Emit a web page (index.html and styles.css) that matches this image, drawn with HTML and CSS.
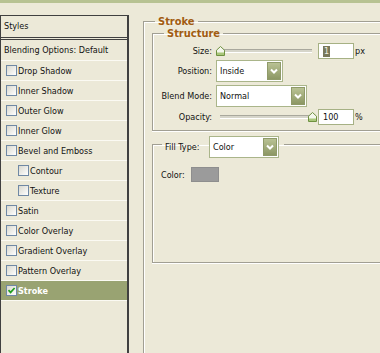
FILE: index.html
```html
<!DOCTYPE html>
<html>
<head>
<meta charset="utf-8">
<link rel="stylesheet" href="styles.css">
</head>
<body>
<div class="topbar"></div>
<div class="main">
  <div class="styles-panel">
    <div class="styles-head">Styles</div>
    <div class="row blend">Blending Options: Default</div>
    <div class="row"><span class="cb"></span>Drop Shadow</div>
    <div class="row"><span class="cb"></span>Inner Shadow</div>
    <div class="row"><span class="cb"></span>Outer Glow</div>
    <div class="row"><span class="cb"></span>Inner Glow</div>
    <div class="row"><span class="cb"></span>Bevel and Emboss</div>
    <div class="row sub"><span class="cb"></span>Contour</div>
    <div class="row sub"><span class="cb"></span>Texture</div>
    <div class="row"><span class="cb"></span>Satin</div>
    <div class="row"><span class="cb"></span>Color Overlay</div>
    <div class="row"><span class="cb"></span>Gradient Overlay</div>
    <div class="row"><span class="cb"></span>Pattern Overlay</div>
    <div class="row active"><span class="cb"><svg width="9" height="9" viewBox="0 0 9 9"><path d="M1.5 4.2L3.6 6.4L7.6 2" fill="none" stroke="#1f9e1f" stroke-width="1.7"/></svg></span>Stroke</div>
  </div>
  <div class="content">
    <fieldset class="grp stroke">
      <legend class="title">Stroke</legend>
      <fieldset class="grp structure">
        <legend class="title sub-title">Structure</legend>
        <div class="frow size-row">
          <span class="lbl">Size:</span>
          <div class="slider">
            <div class="track"></div>
            <svg class="thumb thumb-min" width="9" height="10" viewBox="0 0 9 10"><path d="M0.5 9.5V4.2L4.5 0.5L8.5 4.2V9.5Z" fill="#f4f7ec" stroke="#6f9140"/><rect x="1" y="6.5" width="7" height="2.5" fill="#a9c77a"/></svg>
          </div>
          <div class="num"><span class="sel">1</span></div>
          <span class="unit">px</span>
        </div>
        <div class="frow pos-row">
          <span class="lbl">Position:</span>
          <div class="select w-pos"><span>Inside</span><span class="btn"><svg width="12" height="16" viewBox="0 0 12 16"><path d="M3 6.5L6 9.5L9 6.5" fill="none" stroke="#fff" stroke-width="2"/></svg></span></div>
        </div>
        <div class="frow blend-row">
          <span class="lbl">Blend Mode:</span>
          <div class="select w-blend"><span>Normal</span><span class="btn"><svg width="12" height="16" viewBox="0 0 12 16"><path d="M3 6.5L6 9.5L9 6.5" fill="none" stroke="#fff" stroke-width="2"/></svg></span></div>
        </div>
        <div class="frow op-row">
          <span class="lbl">Opacity:</span>
          <div class="slider">
            <div class="track"></div>
            <svg class="thumb thumb-max" width="9" height="10" viewBox="0 0 9 10"><path d="M0.5 9.5V4.2L4.5 0.5L8.5 4.2V9.5Z" fill="#f4f7ec" stroke="#6f9140"/><rect x="1" y="6.5" width="7" height="2.5" fill="#a9c77a"/></svg>
          </div>
          <div class="num">100</div>
          <span class="unit">%</span>
        </div>
      </fieldset>
      <fieldset class="grp fill">
        <legend class="fill-legend">
          <span class="ft-lbl">Fill Type:</span>
          <div class="select w-fill"><span>Color</span><span class="btn"><svg width="12" height="16" viewBox="0 0 12 16"><path d="M3 6.5L6 9.5L9 6.5" fill="none" stroke="#fff" stroke-width="2"/></svg></span></div>
        </legend>
        <div class="color-row"><span class="c-lbl">Color:</span><span class="swatch"></span></div>
      </fieldset>
    </fieldset>
  </div>
</div>
</body>
</html>
```

FILE: styles.css
```css
html, body {
  margin: 0;
  height: 100%;
  overflow: hidden;
  background: #ece9d8;
}
body {
  font-family: "DejaVu Sans Condensed", "DejaVu Sans", sans-serif;
  font-size: 9px;
  color: #111;
}
.topbar {
  height: 3px;
  background: #b7c292;
}
.main {
  display: flex;
  height: 350px;
  overflow: hidden;
}

/* left list */
.styles-panel {
  flex: none;
  width: 129px;
  box-sizing: border-box;
  margin-top: 12px;
  border-top: 1px solid #404040;
  border-left: 1px solid #404040;
  border-right: 2px solid #404040;
}
.styles-head {
  height: 21px;
  line-height: 21px;
  padding-left: 3px;
  border-bottom: 3px double #404040;
}
.row {
  height: 19px;
  border-bottom: 1px solid #fbfaf3;
  display: flex;
  align-items: center;
  gap: 1px;
  padding-left: 5px;
}
.row.blend {
  height: 20px;
  padding-left: 3px;
}
.row.sub {
  padding-left: 17px;
}
.row.active {
  background: #99a372;
  color: #fff;
  font-weight: bold;
}
.cb {
  flex: none;
  width: 11px;
  height: 11px;
  box-sizing: border-box;
  border: 1px solid #6f88a4;
  background: linear-gradient(135deg, #d9d8cf, #ffffff);
  display: flex;
  align-items: center;
  justify-content: center;
}

/* right side */
.content {
  flex: 1;
  min-width: 0;
  margin-left: 14px;
  padding-top: 12px;
  display: flex;
  flex-direction: column;
}
.grp {
  margin: 0;
  min-width: 0;
  border: 1px solid #a19f93;
  border-right: none;
  box-shadow: inset 1px 1px 0 #fff, 0 1px 0 #fff;
}
.stroke {
  flex: 1;
  padding: 0 0 0 8px;
  border-bottom: none;
  box-shadow: inset 1px 1px 0 #fff;
}
.title {
  font-size: 11px;
  font-weight: bold;
  color: #a15c12;
  line-height: 13px;
  padding: 0 3px;
  margin-left: 3px;
}
.structure {
  padding: 0 0 5px 0;
}
.sub-title {
  line-height: 11px;
  margin-left: 11px;
}
.frow {
  display: flex;
  align-items: center;
}
.size-row { margin-top: 4px; height: 16px; }
.pos-row { margin-top: 1px; height: 22px; }
.blend-row { margin-top: 3px; height: 22px; }
.op-row { margin-top: 2px; height: 16px; }
.lbl {
  flex: none;
  width: 59px;
  margin-right: 4px;
  text-align: right;
}
.slider {
  flex: none;
  position: relative;
  width: 96px;
  height: 16px;
}
.track {
  margin: 6px 0 0 4px;
  height: 2px;
  background: #d6d5ca;
  border-top: 1px solid #a9a89d;
  border-bottom: 1px solid #fff;
}
.thumb {
  position: absolute;
  top: 3px;
}
.thumb-min { left: 0; }
.thumb-max { left: 92px; }
.num {
  flex: none;
  width: 36px;
  height: 16px;
  box-sizing: border-box;
  margin-left: 6px;
  border: 1px solid #a6b184;
  background: #fff;
  padding-left: 4px;
  display: flex;
  align-items: center;
}
.sel {
  background: #78785a;
  color: #f0f0e4;
  line-height: 11px;
  padding: 0 1px;
}
.unit {
  margin-left: 1px;
}
.select {
  flex: none;
  height: 22px;
  box-sizing: border-box;
  border: 1px solid #aab58a;
  background: #fff;
  padding: 0 1px 0 3px;
  display: flex;
  align-items: center;
  justify-content: space-between;
}
.w-pos { width: 67px; }
.w-blend { width: 91px; }
.w-fill { width: 70px; }
.btn {
  flex: none;
  width: 14px;
  height: 18px;
  box-sizing: border-box;
  border: 1px solid #8f9a69;
  background: linear-gradient(#b9c294, #8c9764);
  display: flex;
  align-items: center;
  justify-content: center;
}
.fill {
  padding: 0 0 80px 8px;
}
.fill-legend {
  display: flex;
  align-items: center;
  padding: 5px 5px 0 3px;
  margin-left: 1px;
}
.ft-lbl {
  width: 44px;
}
.color-row {
  display: flex;
  align-items: center;
  height: 15px;
  margin-top: 9px;
}
.c-lbl {
  width: 30px;
}
.swatch {
  width: 28px;
  height: 15px;
  box-sizing: border-box;
  background: #9b9b9b;
  border: 1px solid #8e8e8e;
}
```
